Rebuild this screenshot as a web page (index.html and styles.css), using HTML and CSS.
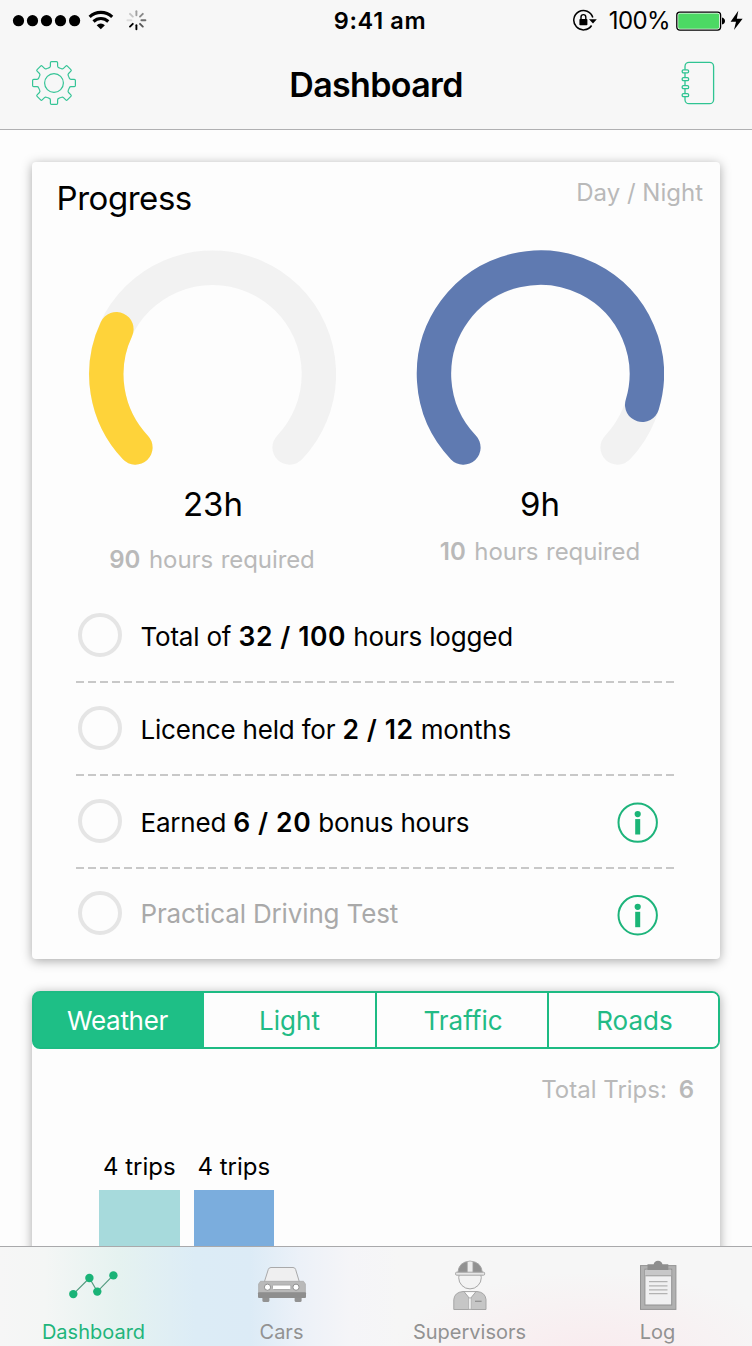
FILE: index.html
```html
<!DOCTYPE html>
<html lang="en">
<head>
<meta charset="utf-8">
<title>Dashboard</title>
<link rel="stylesheet" href="styles.css">
</head>
<body>
<div class="app">
  <header class="header">
    <div class="status">
      <svg class="status-left" width="150" height="40" viewBox="0 0 150 40">
        <g><circle cx="18.5" cy="20.7" r="5.6"/><circle cx="32.5" cy="20.7" r="5.6"/><circle cx="46.5" cy="20.7" r="5.6"/><circle cx="60.5" cy="20.7" r="5.6"/><circle cx="74.6" cy="20.7" r="5.6"/></g>
        <g fill="none" stroke="#000" stroke-width="3.1"><path d="M89.6 16.8a16.6 16.6 0 0 1 22.6 0"/><path d="M93.5 21.5a10.8 10.8 0 0 1 14.8 0"/></g>
        <path d="M96.7 25.2a6 6 0 0 1 8.2 0L100.8 29.2z"/>
        <g stroke="#000" stroke-width="1.9" stroke-linecap="round" transform="translate(136.4 20.2)">
          <path d="M0-5V-9" opacity=".35"/><path d="M3.6-3.6 6.4-6.4" opacity=".45"/><path d="M5 0H9" opacity=".55"/><path d="M3.6 3.6 6.4 6.4" opacity=".65"/><path d="M0 5V9"/><path d="M-3.6 3.6-6.4 6.4"/><path d="M-5 0H-9" opacity=".1"/><path d="M-3.6-3.6-6.4-6.4" opacity=".2"/>
        </g>
      </svg>
      <span class="time">9:41 am</span>
      <div class="status-right">
        <svg width="26" height="24" viewBox="0 0 26 24">
          <path d="M19.6 16.5A9.7 9.7 0 1 1 20.8 8.5" fill="none" stroke="#000" stroke-width="1.5"/>
          <path d="M17 10.2h7.8L21 14.4z"/>
          <rect x="7.4" y="10" width="8" height="6.2" rx=".8"/>
          <path d="M9 10.2V8a2.4 2.4 0 0 1 4.8 0v2.2" fill="none" stroke="#000" stroke-width="1.4"/>
        </svg>
        <span class="percent">100%</span>
        <svg width="70" height="24" viewBox="0 0 70 24">
          <rect x=".8" y="3.1" width="43.8" height="18" rx="3" fill="#fff" stroke="#000" stroke-width="1.3"/>
          <rect x="2.2" y="4.5" width="41" height="15.2" rx="1.6" fill="#4cd964"/>
          <path d="M46 8.6q3 1 3 3.5T46 15.6z"/>
          <path d="M62.3 1.8 54.6 12.8h5.4L58 21l8.6-11.3h-5.8z"/>
        </svg>
      </div>
    </div>
    <div class="nav">
      <svg width="46" height="46" viewBox="-23 -23 46 46" fill="none" stroke="#35c496" stroke-width="1.2">
        <defs><path id="tooth" d="M-6.1-14.8-4.7-15.4Q-3.6-15.8-3.6-17V-20.3Q-3.6-21.4-2.5-21.4H2.5Q3.6-21.4 3.6-20.3V-17Q3.6-15.8 4.7-15.4L6.1-14.8"/></defs>
        <use href="#tooth"/><use href="#tooth" transform="rotate(45)"/><use href="#tooth" transform="rotate(90)"/><use href="#tooth" transform="rotate(135)"/><use href="#tooth" transform="rotate(180)"/><use href="#tooth" transform="rotate(225)"/><use href="#tooth" transform="rotate(270)"/><use href="#tooth" transform="rotate(315)"/>
        <circle r="9.4"/>
      </svg>
      <h1 class="title">Dashboard</h1>
      <svg width="34" height="46" viewBox="0 0 34 46" fill="none" stroke="#2fc492" stroke-width="1.3">
        <rect x="4" y="2.4" width="28.6" height="41.3" rx="4"/>
        <g fill="#f7f7f7"><rect x="1.2" y="9.8" width="6.4" height="3" rx="1.2"/><rect x="1.2" y="17.6" width="6.4" height="3" rx="1.2"/><rect x="1.2" y="25.6" width="6.4" height="3" rx="1.2"/><rect x="1.2" y="33.6" width="6.4" height="3" rx="1.2"/></g>
      </svg>
    </div>
  </header>

  <main class="content">
    <section class="card progress">
      <div class="card-head">
        <h2 class="card-title">Progress</h2>
        <span class="legend">Day / Night</span>
      </div>
      <div class="gauges">
        <div class="gauge">
          <svg width="248" height="218" viewBox="-.5 0 248 218" fill="none" stroke-width="34.4" stroke-linecap="round">
            <path d="M46.9 197.5A106.4 106.4 0 1 1 201.1 197.5" stroke="#f2f2f2"/>
            <path d="M46.9 197.5A106.4 106.4 0 0 1 27.9 79.2" stroke="#fed33a"/>
          </svg>
          <div class="value day-value">23h</div>
          <div class="required day-required"><b>90</b> hours required</div>
        </div>
        <div class="gauge">
          <svg width="248" height="218" viewBox="-.5 0 248 218" fill="none" stroke-width="34.4" stroke-linecap="round">
            <path d="M46.9 197.5A106.4 106.4 0 1 1 201.1 197.5" stroke="#f2f2f2"/>
            <path d="M46.9 197.5A106.4 106.4 0 1 1 225.7 154.8" stroke="#5f7ab1"/>
          </svg>
          <div class="value night-value">9h</div>
          <div class="required night-required"><b>10</b> hours required</div>
        </div>
      </div>
      <ul class="goals">
        <li class="goal"><i class="ring"></i><span class="goal-text">Total of <b>32 / 100</b> hours logged</span></li>
        <li class="goal"><i class="ring"></i><span class="goal-text">Licence held for <b>2 / 12</b> months</span></li>
        <li class="goal"><i class="ring"></i><span class="goal-text">Earned <b>6 / 20</b> bonus hours</span>
          <svg class="info" width="42" height="42" viewBox="0 0 42 42" fill="#1bb577"><circle cx="20.7" cy="20.6" r="19.2" fill="none" stroke="#1db47b" stroke-width="2"/><circle cx="20.7" cy="12.1" r="3.1"/><rect x="18.2" y="17.1" width="5" height="15.4"/></svg></li>
        <li class="goal last"><i class="ring"></i><span class="goal-text muted">Practical Driving Test</span>
          <svg class="info" width="42" height="42" viewBox="0 0 42 42" fill="#1bb577"><circle cx="20.7" cy="21.3" r="19.2" fill="none" stroke="#1db47b" stroke-width="2"/><circle cx="20.7" cy="12.8" r="3.1"/><rect x="18.2" y="17.8" width="5" height="15.4"/></svg></li>
      </ul>
    </section>

    <section class="card stats">
      <div class="segments">
        <span class="segment active">Weather</span><span class="segment first">Light</span><span class="segment">Traffic</span><span class="segment">Roads</span>
      </div>
      <div class="total">Total Trips: <b>6</b></div>
      <div class="chart">
        <div class="column"><span class="column-label">4 trips</span><div class="bar teal"></div></div>
        <div class="column"><span class="column-label">4 trips</span><div class="bar blue"></div></div>
      </div>
    </section>
  </main>

  <nav class="tabs">
    <div class="tab selected">
      <svg width="60" height="60" viewBox="0 0 60 60"><path d="M9.3 38.1 25.4 22 33.3 35.6 49.4 19.2" fill="none" stroke="#549c81" stroke-width="1.2"/><g fill="#1ab377"><circle cx="9.3" cy="38.1" r="4.2"/><circle cx="25.4" cy="22" r="4.2"/><circle cx="33.3" cy="35.6" r="4.2"/><circle cx="49.4" cy="19.4" r="4.2"/></g></svg>
      <span>Dashboard</span>
    </div>
    <div class="tab">
      <svg width="60" height="60" viewBox="0 0 60 60">
        <path d="M12.3 26 16.3 13.4Q17 11.5 19 11.5H41Q43 11.5 43.6 13.4L47.4 26z" fill="#efeff0" stroke="#a9a9aa" stroke-width="1"/>
        <rect x="10.4" y="41" width="7" height="5" rx="1.5" fill="#929292"/><rect x="42.6" y="41" width="7" height="5" rx="1.5" fill="#929292"/>
        <path d="M8.5 25.3H51.5L53.4 28V37H6.6V28z" fill="#b9b9b9" stroke="#a9a9a9" stroke-width=".7"/>
        <rect x="6" y="36.3" width="48" height="5.6" rx="1" fill="#8e8e8e"/>
        <g fill="#fff" stroke="#8e8e8e" stroke-width="1"><circle cx="15.5" cy="31.2" r="3.1"/><circle cx="44" cy="31.2" r="3.1"/><rect x="20.5" y="29" width="18.4" height="4.5" rx="1" stroke="#aaa"/></g>
      </svg>
      <span>Cars</span>
    </div>
    <div class="tab">
      <svg width="60" height="60" viewBox="0 0 60 60" stroke="#a6a6a6" stroke-width="1">
        <path d="M13.8 53.5V43.5Q14.5 36.3 23 35.5H37Q45.3 36.3 46 43.5V53.5z" fill="#c6c6c6"/>
        <path d="M24 35.6H36L30 43z" fill="#fafafa"/><path d="M28.6 42V53.3H31.2V42z" fill="#f5f5f5" stroke-width=".7"/>
        <path d="M35 45.3H41.6" stroke="#929292" stroke-width="1.3"/>
        <circle cx="30" cy="21.6" r="11.3" fill="#f3f3f3"/>
        <path d="M17.8 17.3Q18.4 5.6 30 5.3 41.8 5.6 42.4 17.3z" fill="#919191"/>
        <path d="M27.3 17.2V5.5Q30 4.7 32.9 5.5V17.2z" fill="#ececec" stroke-width=".7"/>
        <rect x="15.6" y="16.2" width="29" height="3" rx="1" fill="#e6e6e6"/>
      </svg>
      <span>Supervisors</span>
    </div>
    <div class="tab">
      <svg width="60" height="60" viewBox="0 0 60 60">
        <rect x="12.5" y="9.6" width="35.4" height="43.8" fill="#b1b1b1" stroke="#949494" stroke-width="1"/>
        <rect x="16.9" y="13.2" width="26.8" height="35.8" fill="#f0f0f1" stroke="#929292" stroke-width="1"/>
        <rect x="17.4" y="14" width="25.8" height="5.8" fill="#c7c7c8"/><path d="M17.4 19.8H43.2" stroke="#999" stroke-width="1"/>
        <path d="M19.5 14V8.3H25.6Q26.5 4.8 30 4.8T34.5 8.3H40.3V14z" fill="#8e8e8e"/>
        <path d="M21 25.7H39.5M21 29.8H39.5M21 33.8H39.5M21 37.7H39.5" stroke="#b2b2b2" stroke-width="1.2"/>
      </svg>
      <span>Log</span>
    </div>
  </nav>
</div>
</body>
</html>
```
FILE: styles.css
```css
* { box-sizing: border-box; }
body { margin: 0; font-family: Inter, "Liberation Sans", sans-serif; color: #000; background: #fdfdfd; }
h1, h2, ul { margin: 0; padding: 0; font-weight: 400; }
b { font-weight: 600; }
svg { display: block; flex: none; }
.app { width: 752px; height: 1346px; overflow: hidden; display: flex; flex-direction: column; }

.header { flex: none; height: 130px; background: #f7f7f7; border-bottom: 1px solid #b0b0b2; }
.status { height: 40px; display: grid; grid-template-columns: 1fr auto 1fr; align-items: start; }
.time { font-size: 23.5px; font-weight: 600; line-height: 40px; padding: 1px 0 0 8px; letter-spacing: .65px; }
.status-right { display: flex; align-items: center; justify-content: flex-end; padding: 1px 6px 0 0; }
.percent { font-size: 24px; line-height: 40px; margin: 0 6px 0 11px; letter-spacing: -.6px; }
.nav { height: 89px; display: flex; align-items: center; justify-content: space-between; padding: 0 37px 4px 31px; }
.title { font-size: 34px; line-height: 40px; font-weight: 600; padding: 4px 6px 0 0; letter-spacing: -.65px; }

.content { flex: 1; min-height: 0; overflow: hidden; padding: 32px 32px 0; }
.card { background: #fdfdfd; box-shadow: 0 2px 11px rgba(0, 0, 0, .34); }
.progress { height: 797px; border-radius: 4px; }
.card-head { height: 88px; display: flex; justify-content: space-between; padding: 15px 17px 0 24.5px; }
.card-title { font-size: 33px; line-height: 42px; letter-spacing: -.45px; }
.legend { font-size: 24px; line-height: 32px; color: #b9b9b9; letter-spacing: 0; }
.gauges { height: 340px; display: grid; grid-template-columns: 248px 248px; column-gap: 80px; padding-left: 56px; }
.gauge { display: flex; flex-direction: column; align-items: center; white-space: nowrap; }
.value { font-size: 33px; line-height: 40px; margin-top: 16px; }
.day-value { padding-left: 2px; }
.required { font-size: 24px; line-height: 32px; color: #b9b9b9; letter-spacing: -.08px; word-spacing: 1px; }
.required b { margin-right: 1px; }
.day-required { margin-top: 20px; }
.night-required { margin-top: 12px; }
.goals { list-style: none; padding: 0 46px 0 44px; }
.goal { height: 93px; display: flex; align-items: center; padding: 0 15px 2px 2px; background: repeating-linear-gradient(90deg, #c8c8c8 0 8px, transparent 8px 12.04px) bottom / 100% 2px no-repeat; }
.goal.last { height: 89px; padding-bottom: 0; background: none; }
.ring { width: 44px; height: 44px; border: 4px solid #e5e5e5; border-radius: 50%; margin: -2px 18.5px 0 0; }
.goal-text { font-size: 26px; line-height: 32px; padding-top: 2px; white-space: nowrap; letter-spacing: -.2px; }
.goal-text b { font-size: 26.5px; letter-spacing: .6px; }
.goal-text.muted { color: #a9a9a9; padding-top: 0; letter-spacing: -.15px; }
.info { margin: 2px 0 0 auto; }

.stats { height: 400px; margin-top: 32px; border-radius: 8px; }
.segments { height: 58px; display: grid; grid-template-columns: 170px 171px 172px 171px; border: 2px solid #1dbb83; border-radius: 8px; overflow: hidden; background: linear-gradient(90deg, #1ebf86 50%, #fdfdfd 50%); }
.segment { display: flex; align-items: center; justify-content: center; font-size: 26px; color: #22bb85; background: #fdfdfd; border-left: 2px solid #1dbb83; padding-left: 2px; }
.segment.first { border-left: 0; padding-left: 0; }
.segment.active { background: #1ebf86; color: #fff; border-left: 0; padding: 0 3px 0 0; letter-spacing: -.3px; }
.total { font-size: 24px; line-height: 32px; margin-top: 25px; padding-right: 26px; text-align: right; color: #b9b9b9; }
.total b { margin-left: 5px; }
.chart { display: flex; gap: 14px; padding: 45px 0 0 67px; }
.column { width: 80.5px; display: flex; flex-direction: column; align-items: center; }
.column-label { font-size: 24px; line-height: 32px; white-space: nowrap; margin-bottom: 7px; }
.bar { width: 100%; height: 120px; }
.bar.teal { background: #a7dadc; }
.bar.blue { background: #7baddd; }

.tabs { flex: none; height: 100px; border-top: 1px solid #a9a9ab; display: grid; grid-template-columns: repeat(4, 1fr);
  background: radial-gradient(ellipse 200px 85px at 590px 110px, #f9ebee, rgba(249, 235, 238, 0)), linear-gradient(90deg, #f6f6f6 0, #f4f6f5 45px, #e5f2f0 120px, #dcecf6 195px, #dcebf6 250px, #ecf1f8 300px, #f5f5f8 350px, #f6f6f6 400px); }
.tab { display: flex; flex-direction: column; align-items: center; padding: 9px 1px 0 0; font-size: 20px; line-height: 24px; color: #929292; }
.tab span { margin-top: 4px; }
.tab.selected { color: #1fb57c; }
```
